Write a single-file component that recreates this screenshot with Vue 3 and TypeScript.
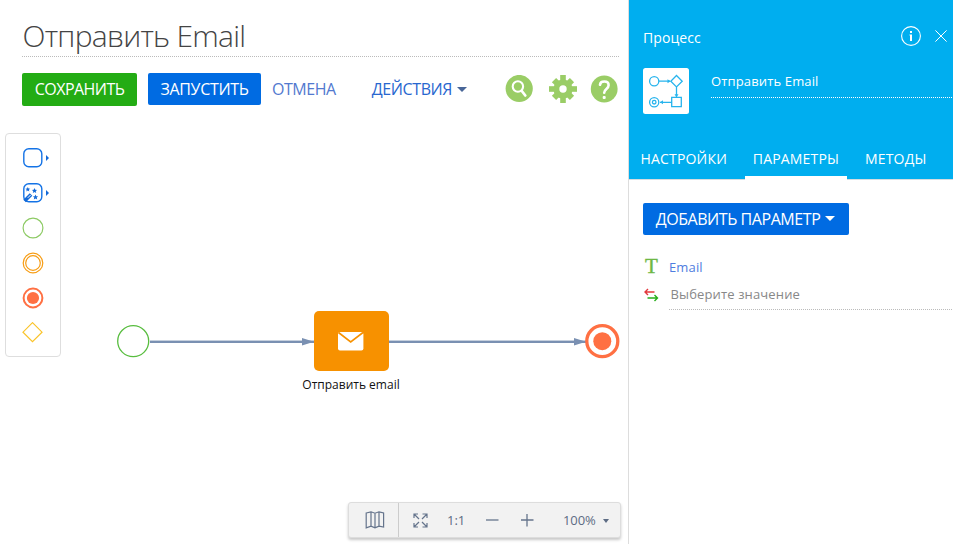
<script setup lang="ts">
import { ref } from 'vue'

const title = ref('Отправить Email')
const tabs = ['НАСТРОЙКИ', 'ПАРАМЕТРЫ', 'МЕТОДЫ']
const activeTab = ref('ПАРАМЕТРЫ')
const palette = ['task', 'wizard', 'start', 'intermediate', 'end', 'gateway'] as const
</script>

<template>
  <div class="designer">
    <main class="workspace">
      <header class="title-row"><h1>{{ title }}</h1></header>
      <div class="actions">
        <button class="btn save"><span>СОХРАНИТЬ</span></button>
        <button class="btn run"><span>ЗАПУСТИТЬ</span></button>
        <button class="link cancel">ОТМЕНА</button>
        <button class="link menu">ДЕЙСТВИЯ<i class="caret"></i></button>
        <div class="tools">
          <svg width="28" height="28" viewBox="0 0 28 28">
            <circle cx="14.2" cy="13.5" r="13.6" fill="#9acd66" />
            <circle cx="12.9" cy="11.5" r="5.2" fill="none" stroke="#fff" stroke-width="2.1" />
            <path d="M16.8 16 20.3 20.5" stroke="#fff" stroke-width="2.7" stroke-linecap="round" />
          </svg>
          <svg class="gear" width="28" height="28" viewBox="0 0 28 28" fill="#9acd66">
            <rect x="11.2" y="0" width="5.6" height="28" />
            <rect x="0" y="11.2" width="28" height="5.6" />
            <rect x="11" y="1.3" width="6" height="25.4" transform="rotate(45 14 14)" />
            <rect x="11" y="1.3" width="6" height="25.4" transform="rotate(-45 14 14)" />
            <circle cx="14" cy="14" r="9.6" />
            <circle cx="14" cy="14" r="3.7" fill="#fff" />
          </svg>
          <svg class="help" width="28" height="28" viewBox="0 0 28 28">
            <circle cx="14.2" cy="14" r="13.4" fill="#9acd66" />
            <path d="M10 9.8C10.4 5.4 18.6 5.4 18.6 10.2c0 3.8-4.4 3.7-4.4 7.6" fill="none" stroke="#fff" stroke-width="2.6" stroke-linecap="round" />
            <rect x="12.7" y="21" width="3" height="3" rx="1" fill="#fff" />
          </svg>
        </div>
      </div>

      <section class="canvas">
        <svg class="flows" width="628" height="200" viewBox="0 240 628 200">
          <g stroke="#c6d0de" stroke-width="1"><path d="M150 340.5H314M389 340.5H586" /></g>
          <g stroke="#7a90b2" stroke-width="2"><path d="M150 342H314M389 342H586" /></g>
          <path d="M302 338 314 341.7 302 345.5ZM574 338 586 341.7 574 345.5Z" fill="#7a90b2" />
          <circle cx="133.2" cy="341.2" r="15.5" fill="#fff" stroke="#58bd3f" stroke-width="1.3" />
          <circle cx="602.3" cy="341.2" r="15.5" fill="#fff" stroke="#ff7043" stroke-width="3.3" />
          <circle cx="602.3" cy="341.2" r="9" fill="#ff7043" />
        </svg>
        <div class="task-node">
          <div class="task-box">
            <svg width="26" height="20" viewBox="0 0 26 20">
              <rect y="1" width="25.4" height="18.5" rx="2" fill="#fff" />
              <path d="M.5 1.5 12.7 11 25 1.5" fill="none" stroke="#f79100" stroke-width="1.6" />
            </svg>
          </div>
          <span>Отправить email</span>
        </div>

        <nav class="palette">
          <div v-for="item in palette" :key="item" class="palette-item">
            <svg width="22" height="22" viewBox="0 0 22 22" fill="none">
              <rect v-if="item === 'task'" x="1.8" y="1.8" width="18" height="18" rx="5" stroke="#1473e6" stroke-width="1.4" />
              <g v-else-if="item === 'wizard'">
                <rect x="1.8" y="1.8" width="18" height="18" rx="5" stroke="#1473e6" stroke-width="1.4" />
                <path d="M2.6 19 9 12.5" stroke="#1269d8" stroke-width="3.6" />
                <path d="M5.8 15.8 8.6 13" stroke="#fff" />
                <g fill="#1269d8">
                  <path d="m5.8 5 .7 1.6 1.7.1-1.3 1.1.4 1.7-1.5-.9-1.5.9.4-1.7-1.3-1.1 1.7-.1Z" />
                  <path d="m12.5 6 .8 1.8 1.9.1-1.5 1.2.5 1.9-1.7-1-1.7 1 .5-1.9-1.5-1.2 1.9-.1Z" />
                  <path d="m13.5 12.5 .8 1.8 1.9.1-1.5 1.2.5 1.9-1.7-1-1.7 1 .5-1.9-1.5-1.2 1.9-.1Z" />
                </g>
              </g>
              <circle v-else-if="item === 'start'" cx="11" cy="11" r="9.9" stroke="#8dca64" stroke-width="1.2" />
              <g v-else-if="item === 'intermediate'" stroke="#f79c12" stroke-width="1.2">
                <circle cx="11" cy="11" r="9.8" /><circle cx="11" cy="11" r="7.3" />
              </g>
              <g v-else-if="item === 'end'">
                <circle cx="11" cy="11" r="9.4" stroke="#ff7043" stroke-width="2" />
                <circle cx="11" cy="11" r="6.1" fill="#ff7043" />
              </g>
              <path v-else d="M10.5 .7 20 10.2l-9.5 9.5L1 10.2Z" stroke="#fac328" stroke-width="1.2" />
            </svg>
            <i v-if="item === 'task' || item === 'wizard'" class="more"></i>
          </div>
        </nav>

        <div class="zoom-bar">
          <div class="map">
            <svg width="20" height="18" viewBox="0 0 20 18" fill="none" stroke="#65748c" stroke-width="1.2">
              <path d="M1.2 2 6 .8 10 2.2 14 .8 18.6 2V16L14 15.2 10 16.8 6 15.2 1.2 16.8ZM6 .8V15.2M10 2.2V16.8M14 .8V15.2" />
            </svg>
          </div>
          <svg class="fit" width="15" height="15" viewBox="0 0 15 15" fill="none" stroke="#65748c" stroke-width="1.2">
            <path d="M1 5V1H5M1 1 6 6M9.5 1H14V5M14 1 9 6M1 10V14H5M1 14 6 9M9.5 14H14V10M14 14 9 9" />
          </svg>
          <span class="ratio">1:1</span>
          <svg class="minus" width="14" height="14" viewBox="0 0 14 14"><path d="M1 7H13.5" stroke="#65748c" stroke-width="1.3" /></svg>
          <svg class="plus" width="14" height="14" viewBox="0 0 14 14"><path d="M1 7H13.5M7 1V13.5" stroke="#65748c" stroke-width="1.3" /></svg>
          <span class="percent">100%</span><i class="small-caret"></i>
        </div>
      </section>
    </main>

    <aside class="properties">
      <header class="panel-head">
        <div class="panel-title">
          <span>Процесс</span>
          <div class="panel-icons">
            <svg width="20" height="20" viewBox="0 0 20 20">
              <circle cx="10" cy="10" r="9.4" fill="none" stroke="#fff" stroke-width="1.1" />
              <path d="M9 5h2v2H9ZM8.5 8.5H11V15H9V9.5H8.5Z" fill="#fff" />
            </svg>
            <svg width="12" height="12" viewBox="0 0 12 12"><path d="m.4.4 11.2 11.2M11.6.4.4 11.6" stroke="#fff" stroke-width="1" /></svg>
          </div>
        </div>
        <div class="process-row">
          <svg class="process-icon" width="46" height="46" viewBox="0 0 46 46" fill="none" stroke="#27b4ed" stroke-width="1.3">
            <rect width="46" height="46" rx="2.5" fill="#fff" stroke="none" />
            <circle cx="11.2" cy="13.2" r="4.6" />
            <path d="M16 13.2H27M33.5 7.5 39.2 13.2 33.5 18.9 27.8 13.2ZM33.5 19V29M28.7 29.3H38.3V38.7H28.7ZM28.5 34.3H17" />
            <path d="m24.5 11.2 3 2-3 2ZM31.5 26.3l2 3 2-3ZM20 32.2l-3 2 3 2Z" fill="#27b4ed" stroke="none" />
            <circle cx="11.2" cy="34.2" r="4.6" /><circle cx="11.2" cy="34.2" r="1.8" />
          </svg>
          <div class="process-name">{{ title }}</div>
        </div>
        <nav class="tabs">
          <button v-for="tab in tabs" :key="tab" :class="{ active: tab === activeTab }" @click="activeTab = tab"><span>{{ tab }}</span></button>
        </nav>
      </header>
      <section class="panel-body">
        <button class="btn add"><span>ДОБАВИТЬ ПАРАМЕТР</span><i class="caret"></i></button>
        <div class="param-name"><span class="type">T</span><a>Email</a></div>
        <div class="param-value">
          <svg width="15" height="14" viewBox="0 0 15 14" fill="none" stroke-width="1.4">
            <path d="M10.5 4H1M4 1 1 4l3 3" stroke="#e2383d" />
            <path d="M3.5 10H13.7M10.5 7l3 3-3 3" stroke="#27ae19" />
          </svg>
          <div class="placeholder">Выберите значение</div>
        </div>
      </section>
    </aside>
  </div>
</template>

<style>
body { margin: 0; overflow: hidden; background: #fff; }
</style>
<style scoped>
* { box-sizing: border-box; }
.designer { display: flex; width: 953px; height: 544px; overflow: hidden; font-family: "Open Sans", sans-serif; color: #444; }
svg { display: block; flex: none; }
button { border: 0; background: none; padding: 0; font: inherit; white-space: nowrap; }
.workspace { width: 628px; flex: none; display: flex; flex-direction: column; position: relative; }
.title-row { height: 57px; margin: 0 9px 0 22px; background: repeating-linear-gradient(90deg, #bbb 0 1px, transparent 1px 2px) left bottom / 100% 1px no-repeat; }
h1 { margin: 0; padding: 14px 0 0 .5px; font-size: 30px; line-height: 44px; font-weight: 300; letter-spacing: -.74px; }
.actions { display: flex; align-items: flex-start; height: 76px; padding: 16px 0 0 22px; font-size: 16px; }
.btn { display: flex; justify-content: center; align-items: center; height: 32px; color: #fff; border-radius: 2px; font-size: 16px; }
.save { width: 115px; height: 33px; padding-bottom: 1px; background: #23ac14; letter-spacing: -.55px; }
.run { width: 113px; margin-left: 11px; background: #006be2; letter-spacing: -.32px; }
.link { height: 32px; font-size: 16px; font-weight: 400; color: #5279cf; }
.cancel { margin-left: 11px; letter-spacing: -.45px; }
.menu { display: flex; align-items: center; margin-left: 36px; color: #2867cf; letter-spacing: -.4px; }
.caret { width: 0; height: 0; margin-left: 5px; border: 5.5px solid transparent; border-top-color: #496698; border-bottom: 0; }
.tools { display: flex; margin: 0 10px 0 auto; padding-top: 2px; }
.gear { margin-left: 16px; }
.help { margin-left: 13px; }
.canvas { flex: 1; }
.flows { position: absolute; left: 0; top: 240px; }
.task-node { position: absolute; left: 296px; top: 311px; width: 110px; display: flex; flex-direction: column; align-items: center; font-size: 12px; color: #111; }
.task-node > span { line-height: 18px; margin-top: 5px; white-space: nowrap; }
.task-box { width: 75px; height: 60px; border-radius: 5px; background: #f79100; display: flex; align-items: center; justify-content: center; }
.palette { position: absolute; left: 5px; top: 133px; width: 56px; height: 224px; display: flex; flex-direction: column; gap: 13px; padding: 13px 0 0 16px; border: 1px solid #dedede; border-radius: 4px; background: #fff; }
.palette-item { display: flex; align-items: center; height: 22px; }
.more { border: 3px solid transparent; border-left-color: #1269d8; border-right: 0; margin-left: 2px; }
.zoom-bar { position: absolute; left: 348px; top: 502px; width: 273px; height: 36px; display: flex; align-items: center; background: #f2f2f2; border: 1px solid #ddd; border-radius: 3px; box-shadow: 0 2px 3px #c8c8c8; font-size: 13px; color: #5d6c84; }
.map { width: 50px; height: 34px; padding: 8px 16px; border-right: 1px solid #ccc; }
.fit { margin-left: 14px; }
.ratio { width: 20px; margin-left: 19px; white-space: nowrap; }
.minus { margin-left: 18px; }
.plus { margin-left: 21px; }
.percent { margin-left: 29px; letter-spacing: -.1px; }
.small-caret { margin: 2px 0 0 7px; border: 3.5px solid transparent; border-top: 4px solid #5d6c84; border-bottom: 0; }
.properties { flex: 1; border-left: 1px solid #ddd; min-width: 0; }
.panel-head { height: 180px; display: flex; flex-direction: column; background: #00aeef; border-bottom: 1px solid #d5dce0; color: #fff; }
.panel-title { height: 68px; display: flex; align-items: flex-start; justify-content: space-between; padding: 26px 6px 0 14px; font-size: 14px; line-height: 24px; letter-spacing: .1px; }
.panel-icons { display: flex; align-items: center; gap: 14px; }
.process-row { display: flex; padding-left: 14px; height: 72px; }
.process-name { flex: 1; height: 30px; margin-left: 22px; font-size: 13px; line-height: 27px; letter-spacing: .14px; background: repeating-linear-gradient(90deg, #fff 0 1px, transparent 1px 2px) left bottom / 100% 1px no-repeat; }
.tabs { display: flex; height: 39px; }
.tabs button { display: flex; justify-content: center; color: #fff; font-size: 14px; letter-spacing: .18px; line-height: 37px; height: 39px; margin-left: 11.5px; }
.tabs button.active { margin-left: 18px; width: 102px; height: 40px; border-bottom: 4px solid #fff; }
.tabs button:last-child { margin-left: 18px; }
.panel-body { padding: 23px 0 0 14px; }
.add { width: 206px; padding-right: 1px; background: #006be2; letter-spacing: -.44px; }
.add .caret { border-top-color: #fff; margin-left: 5px; margin-top: -2px; }
.param-name { display: flex; align-items: center; height: 28px; margin-top: 17px; font-size: 13px; color: #4f7de0; letter-spacing: .15px; }
.param-name a { margin-top: 1px; }
.type { width: 26px; padding-left: 2px; font: 21px/24px "Liberation Serif", serif; color: #6eb744; -webkit-text-stroke: .4px #6eb744; }
.param-value { display: flex; padding: 9px 0 0 1px; height: 31px; }
.param-value svg { margin-top: -1px; }
.placeholder { flex: 1; height: 30px; margin: -9px 0 0 10px; padding-left: 1.5px; font-size: 13px; line-height: 29px; letter-spacing: .14px; color: #888; background: repeating-linear-gradient(90deg, #bbb 0 1px, transparent 1px 2px) left bottom / 100% 1px no-repeat; }
</style>
